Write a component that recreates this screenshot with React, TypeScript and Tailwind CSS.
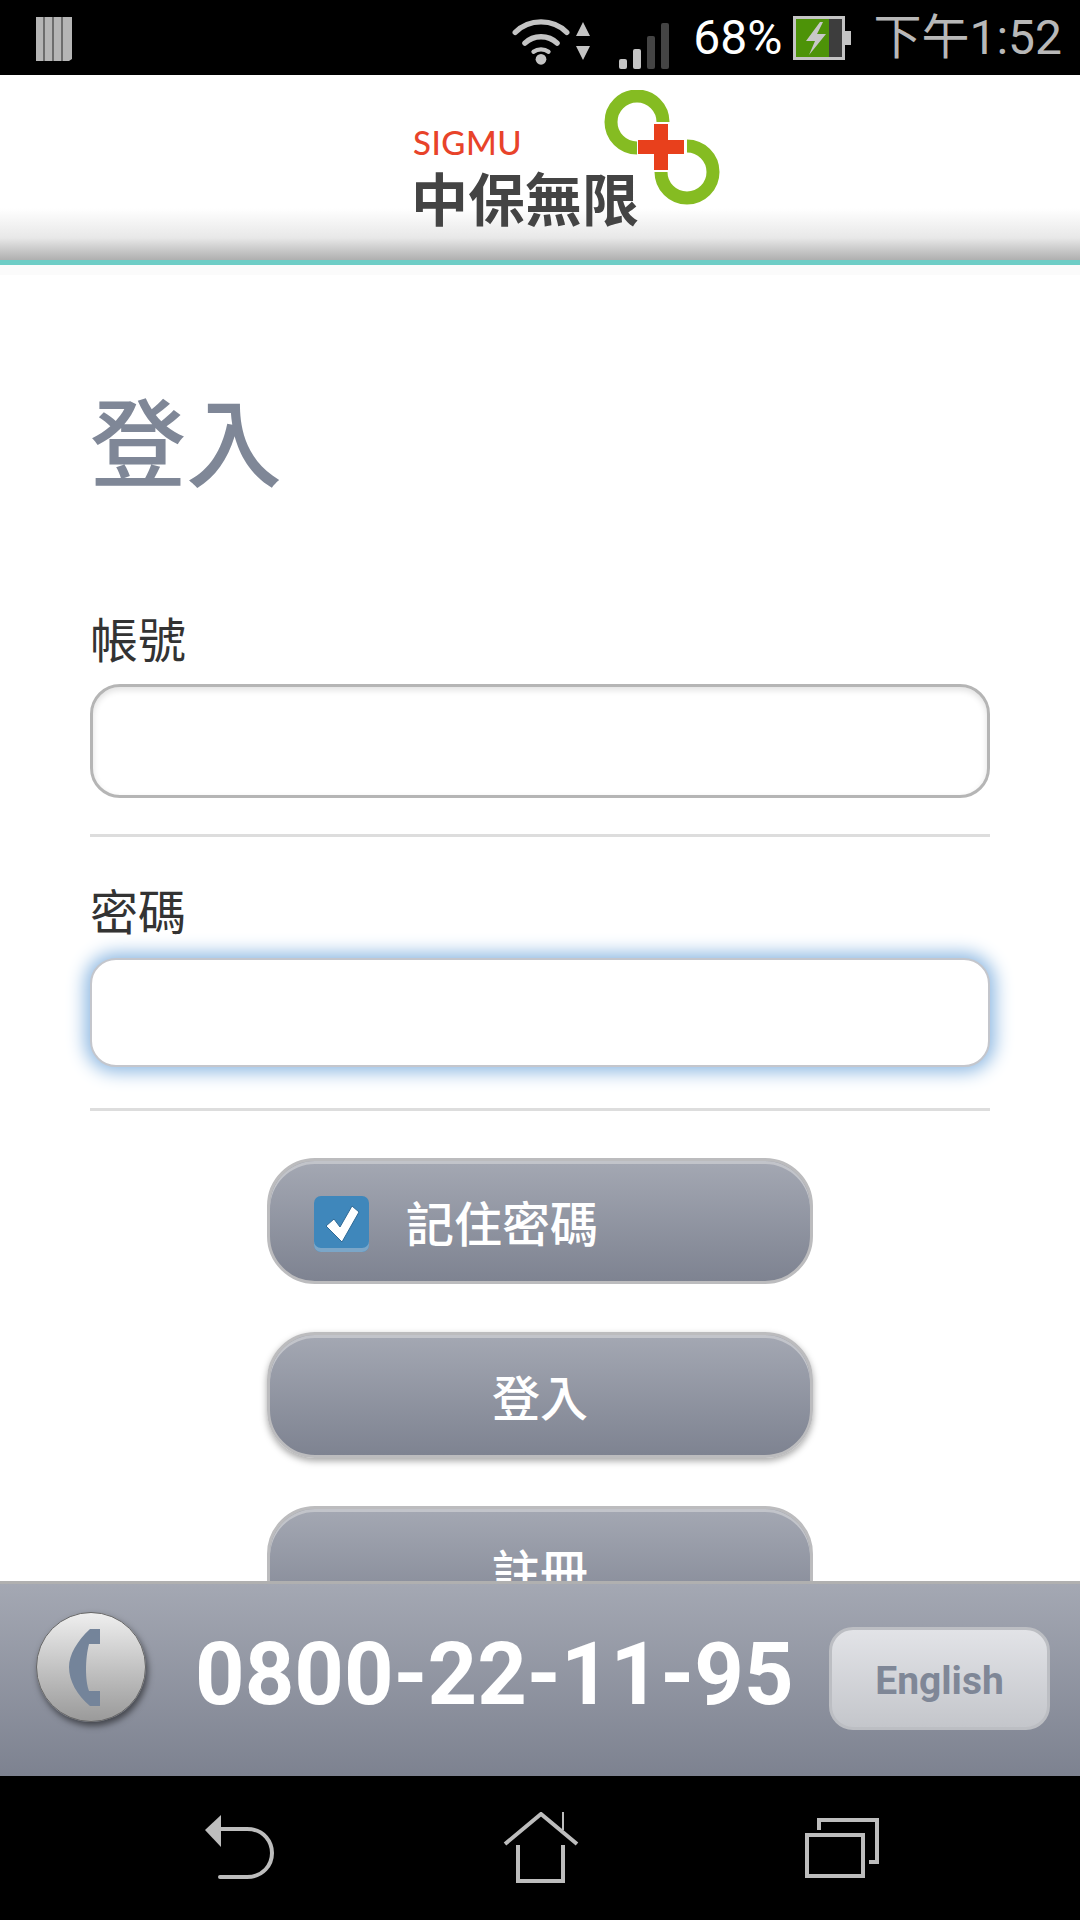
const CJK = "font-['Roboto','Noto_Sans_CJK_TC',sans-serif]";

function StatusBar() {
  return (
    <div className={`flex h-[75px] shrink-0 items-center bg-black pl-[35px] pr-[18px] ${CJK}`}>
      <svg width="38" height="46" viewBox="0 0 38 46" className="mt-[2px]">
        <path d="M1 1h36v42l-3 2H1z" fill="#b5b5b5" />
        <path d="M9 1v44M18 1v44M27 1v44" stroke="#555" strokeWidth="1.5" />
      </svg>
      <div className="flex-1" />
      <svg width="58" height="52" viewBox="0 0 54 46" fill="none" stroke="#c4c4c4" strokeLinecap="round" className="mt-[6px]">
        <path d="M3 15C16 2 38 2 51 15" strokeWidth="5" />
        <path d="M12 25c8-8 22-8 30 0" strokeWidth="5" />
        <path d="M20 33c4-3 10-3 14 0" strokeWidth="4" />
        <circle cx="27" cy="40" r="5" fill="#c4c4c4" stroke="none" />
      </svg>
      <svg width="16" height="42" viewBox="0 0 16 42" className="ml-[5px] mt-[6px]" fill="#c4c4c4">
        <path d="M8 2l7 14H1zM8 40L1 26h14z" />
      </svg>
      <svg width="50" height="46" viewBox="0 0 50 46" className="ml-[28px] mt-[16px]">
        <rect x="0" y="36" width="8" height="10" rx="2" fill="#c4c4c4" />
        <rect x="14" y="26" width="8" height="20" rx="2" fill="#c4c4c4" />
        <rect x="28" y="13" width="8" height="33" rx="2" fill="#444" />
        <rect x="42" y="0" width="8" height="46" rx="2" fill="#444" />
      </svg>
      <span className="ml-[24px] text-[48px] leading-[50px] text-white">68%</span>
      <svg width="58" height="44" viewBox="0 0 58 44" className="ml-[11px]">
        <rect x="1.5" y="1.5" width="49" height="41" fill="#3d3d3d" stroke="#c4c4c4" strokeWidth="3" />
        <rect x="3" y="3" width="33" height="38" fill="#4d9308" />
        <rect x="50" y="15" width="8" height="14" fill="#c4c4c4" />
        <path d="M27 6L13 25h9l-6 14 17-21h-9l6-12z" fill="#c8c8c8" />
      </svg>
      <span className="ml-[22px] text-[48px] leading-[50px] text-[#b8b8b8]">下午1:52</span>
    </div>
  );
}

function Header() {
  return (
    <div className="shrink-0">
      <div className="flex h-[185px] justify-center bg-gradient-to-b from-white from-[72%] via-[#e8e8e8] via-[88%] to-[#b0b0b0] pt-[15px]">
        <div className="relative ml-[52px] h-[142px] w-[308px]">
          <div className="ml-[1px] mt-[37px] font-['Lato',sans-serif] text-[33px] font-medium leading-[30px] tracking-[0.5px] text-[#e8432a]">
            SIGMU
          </div>
          <div className="-ml-[1px] mt-[6px] whitespace-nowrap font-['Noto_Sans_CJK_TC',sans-serif] text-[57px] font-bold leading-[66px] text-[#444]">
            中保無限
          </div>
          <svg width="120" height="120" viewBox="0 0 120 120" className="absolute left-[190px] top-0" fill="none">
            <path d="M61 32A26 26 0 1 0 35 58" stroke="#85bc22" strokeWidth="13" />
            <path d="M59 82A26 26 0 1 0 85 56" stroke="#85bc22" strokeWidth="13" />
            <path d="M52 34h14v16h16v14H66v16H52V64H36V50h16z" fill="#e8401c" />
          </svg>
        </div>
      </div>
      <div className="h-[5px] bg-[#6ecdc6]" />
      <div className="h-[10px] bg-[#fbfbfb]" />
    </div>
  );
}

function Pill({ children, raised = false }: { children: React.ReactNode; raised?: boolean }) {
  return (
    <button
      className={`mx-auto mb-[48px] flex h-[126px] w-[546px] shrink-0 items-center rounded-[48px] border-[3px] border-[#bcbcbe] bg-gradient-to-b from-[#a4a8b3] to-[#7e8391] text-white ${raised ? "shadow-[inset_0_3px_0_#c2c4ca,0_3px_7px_rgba(0,0,0,0.35)]" : "shadow-[inset_0_3px_0_#c2c4ca]"}`}
    >
      {children}
    </button>
  );
}

export default function App() {
  return (
    <div className="flex h-[1920px] w-[1080px] flex-col overflow-hidden bg-white">
      <StatusBar />
      <Header />

      <div className="min-h-0 flex-1 overflow-hidden px-[90px] font-['Noto_Sans_CJK_TC',sans-serif]">
        <h1 className="mt-[115px] text-[96px] font-medium leading-[96px] text-[#7f8797]">登入</h1>

        <label className="mt-[126px] block text-[48px] leading-[50px] text-[#333]">帳號</label>
        <input className="mt-[22px] block h-[114px] w-[900px] rounded-[30px] border-[3px] border-[#b5b5b5] bg-white shadow-[inset_0_3px_6px_rgba(0,0,0,0.12)] outline-none" />
        <div className="mt-[36px] h-[3px] bg-[#dddddd]" />

        <label className="mt-[47px] block text-[48px] leading-[50px] text-[#333]">密碼</label>
        <input className="mt-[24px] block h-[109px] w-[900px] rounded-[26px] border-[2px] border-[#c4c6cc] bg-white shadow-[0_0_18px_5px_#8db8e2] outline-none" />
        <div className="mt-[41px] h-[3px] bg-[#dddddd]" />

        <div className="mt-[47px]">
          <Pill>
            <span className="ml-[44px] mt-[6px] flex h-[56px] w-[55px] items-center justify-center rounded-[7px] bg-[#3f87bb] shadow-[inset_0_-4px_0_#7ba6c8]">
              <svg width="36" height="38" viewBox="0 0 36 38">
                <path d="M2 21l8-7 6 8L28 1l7 6-17 30z" fill="white" stroke="#2f6a96" strokeWidth="1" />
              </svg>
            </span>
            <span className="ml-[37px] text-[48px] font-medium leading-[50px]">記住密碼</span>
          </Pill>
          <Pill raised>
            <span className="w-full text-center text-[48px] font-medium leading-[50px]">登入</span>
          </Pill>
          <Pill>
            <span className="w-full text-center text-[48px] font-medium leading-[50px]">註冊</span>
          </Pill>
        </div>
      </div>

      <div className="flex h-[195px] shrink-0 items-start border-t-[3px] border-[#b0b0b0] bg-gradient-to-b from-[#a4a8b3] to-[#7d8290] pl-[36px] pt-[28px] font-['Roboto',sans-serif]">
        <div className="flex h-[110px] w-[110px] shrink-0 items-center justify-center rounded-full border border-[#666] bg-gradient-to-b from-[#efefef] to-[#9a9a9a] shadow-[2px_4px_6px_rgba(0,0,0,0.5)]">
          <svg width="31" height="77" viewBox="0 0 31 77" className="mr-[14px]">
            <path d="M31 0H21C8 12 0 26 0 38c0 14 8 28 21 39h10V62H20c-4-10-4-32 0-47h11z" fill="#74849a" />
          </svg>
        </div>
        <span className="ml-[49px] mt-[17px] whitespace-nowrap text-[86.5px] font-bold leading-[92px] text-white">0800-22-11-95</span>
        <button className="ml-auto mr-[30px] mt-[15px] h-[103px] w-[221px] shrink-0 rounded-[24px] border-[3px] border-[#bcbec3] bg-gradient-to-b from-[#e2e3e7] to-[#c4c6cb] pt-[6px] text-[39px] font-bold text-[#7f8797]">
          English
        </button>
      </div>

      <div className="flex h-[144px] shrink-0 items-center justify-center gap-[226px] bg-black pl-[6px]">
        <svg width="72" height="66" viewBox="0 0 72 66" fill="none" stroke="#bdbdbd" strokeWidth="4">
          <path d="M0 15L16 0v32z" fill="#bdbdbd" stroke="none" />
          <path d="M15 14h27c18 0 25 14 25 24 0 12-9 24-25 24H15" strokeLinecap="round" />
        </svg>
        <svg width="76" height="72" viewBox="0 0 76 72" fill="none" stroke="#bdbdbd" strokeWidth="4">
          <path d="M2 32L38 2l36 30" />
          <path d="M60 0v18" strokeWidth="2" />
          <path d="M15 33v36h45V33" />
        </svg>
        <svg width="76" height="60" viewBox="0 0 76 60" fill="none" stroke="#bdbdbd" strokeWidth="4">
          <rect x="2" y="17" width="56" height="41" />
          <path d="M14 12V2h58v42h-8" />
        </svg>
      </div>
    </div>
  );
}
